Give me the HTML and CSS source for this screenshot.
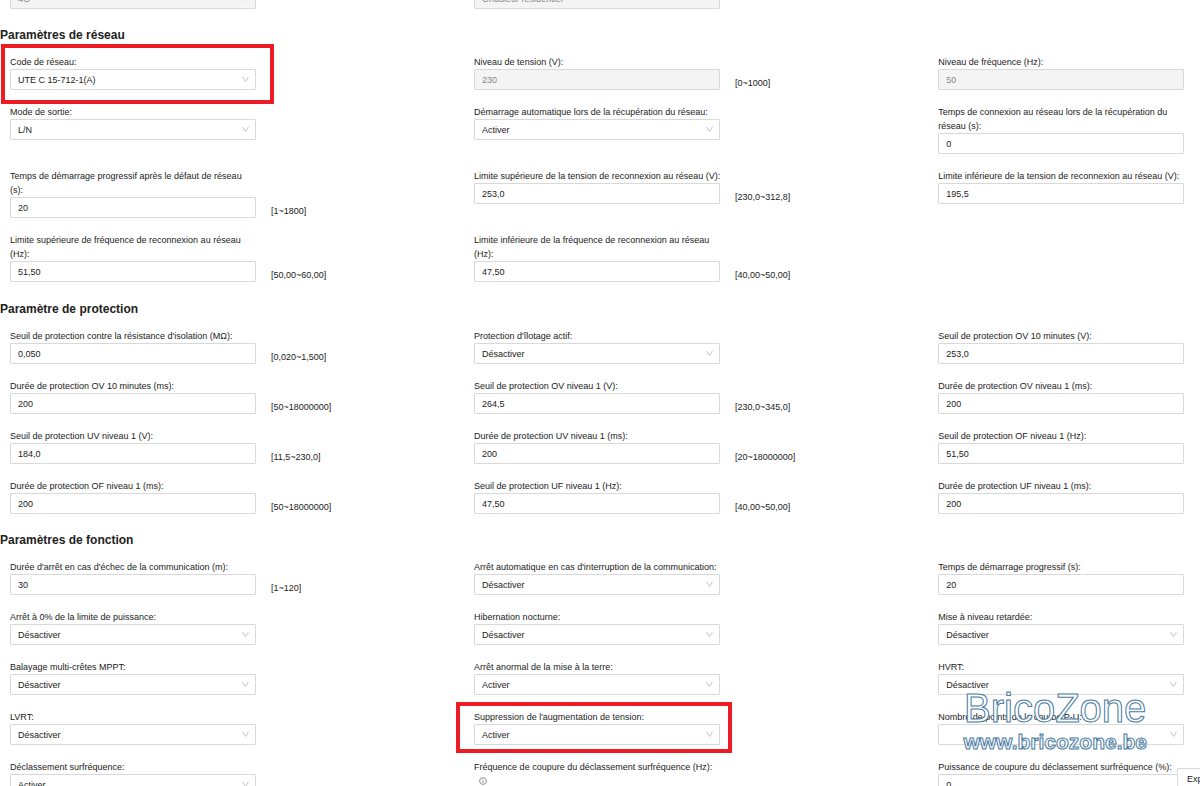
FILE: index.html
```html
<!DOCTYPE html>
<html lang="fr">
<head>
<meta charset="utf-8">
<title>Paramètres de l'onduleur</title>
<link rel="stylesheet" href="styles.css">
<script src="form.js" defer></script>
</head>
<body>
<main class="page">
  <form id="form"></form>
</main>
<button class="export" type="button">Exporter</button>
<div class="watermark"><span class="brand">BricoZone</span><span class="site">www.bricozone.be</span></div>
</body>
</html>
```
FILE: styles.css
```css
* { box-sizing: border-box; }
html, body { height: 100%; margin: 0; overflow: hidden; }
body {
  position: relative;
  background: #fff;
  color: #222;
  font: 9px/14px "Liberation Sans", Arial, sans-serif;
}
.page { height: 100%; overflow: hidden; }
.cut { margin-top: -26px; }
.cut + section { padding-bottom: 1px; }
.title { margin: 0; height: 31px; padding-top: 2px; font-size: 12px; line-height: 18px; font-weight: 700; color: #222; }
.grid { display: grid; grid-template-columns: repeat(3, 39%); align-items: start; padding-left: 10px; }
.field { display: flex; align-items: flex-start; min-height: 50px; padding-bottom: 15px; }
.box { position: relative; width: 53%; }
.label { display: block; margin-right: -2px; color: #222; }
.control { position: relative; display: block; }
.control input, .control select {
  display: block;
  width: 100%;
  height: 21px;
  margin: 0;
  padding: 0 7px;
  border: 1px solid #d9d9d9;
  border-radius: 1px;
  background: #fff;
  color: #222;
  font: inherit;
  appearance: none;
  opacity: 1;
}
.control :disabled { background: #f4f4f4; color: #888; }
.arrow { position: absolute; right: 7px; top: 7px; width: 7px; height: 7px; pointer-events: none; }
.arrow path, .info path, .info circle { fill: none; stroke: #c4c4c4; stroke-width: 1; }
.info { display: block; width: 8px; height: 8px; margin: 3px 0 3px 5px; }
.info path, .info circle { stroke: #777; stroke-width: .8; }
.range { align-self: flex-end; margin-left: 15px; line-height: 14px; color: #222; }
.marked::after { content: ""; position: absolute; inset: -11px -18px -14px -9px; border: 4px solid #ed1c24; pointer-events: none; }
.marked.wide::after { inset: -8px -12px -8px -18px; }
.export {
  position: absolute; right: -30px; bottom: -4px; width: 53px; height: 22px; padding: 0 9px;
  border: 1px solid #d9d9d9; border-radius: 1px; background: #fff; color: #222; font: inherit; text-align: left;
}
.watermark {
  position: absolute; right: 53px; bottom: 31px; display: flex; flex-direction: column; align-items: center;
  color: rgba(255, 255, 255, .95); font-family: "Liberation Sans", Arial, sans-serif; pointer-events: none;
  -webkit-text-stroke: 1px #46799f;
}
.brand { font-size: 40px; line-height: 42px; }
.site { font-size: 21px; line-height: 26px; font-weight: 700; }
```
FILE: form.js
```js
const YES = "Activer", NO = "Désactiver";
// Each field: [label, value, options]; s = drop-down, d = disabled, r = allowed range, m = marked frame, i = info icon
const sections = [
  ["", [
    ["Méthode de communication:", "4G", {s: 1, d: 1}],
    ["Type d'onduleur:", "Onduleur résidentiel", {d: 1}]
  ]],
  ["Paramètres de réseau", [
    ["Code de réseau:", "UTE C 15-712-1(A)", {s: 1, m: "marked"}],
    ["Niveau de tension (V):", "230", {d: 1, r: "[0~1000]"}],
    ["Niveau de fréquence (Hz):", "50", {d: 1}],
    ["Mode de sortie:", "L/N", {s: 1}],
    ["Démarrage automatique lors de la récupération du réseau:", YES, {s: 1}],
    ["Temps de connexion au réseau lors de la récupération du réseau (s):", "0"],
    ["Temps de démarrage progressif après le défaut de réseau<br>(s):", "20", {r: "[1~1800]"}],
    ["Limite supérieure de la tension de reconnexion au réseau (V):", "253,0", {r: "[230,0~312,8]"}],
    ["Limite inférieure de la tension de reconnexion au réseau (V):", "195,5"],
    ["Limite supérieure de fréquence de reconnexion au réseau (Hz):", "51,50", {r: "[50,00~60,00]"}],
    ["Limite inférieure de la fréquence de reconnexion au réseau (Hz):", "47,50", {r: "[40,00~50,00]"}]
  ]],
  ["Paramètre de protection", [
    ["Seuil de protection contre la résistance d'isolation (MΩ):", "0,050", {r: "[0,020~1,500]"}],
    ["Protection d'îlotage actif:", NO, {s: 1}],
    ["Seuil de protection OV 10 minutes (V):", "253,0"],
    ["Durée de protection OV 10 minutes (ms):", "200", {r: "[50~18000000]"}],
    ["Seuil de protection OV niveau 1 (V):", "264,5", {r: "[230,0~345,0]"}],
    ["Durée de protection OV niveau 1 (ms):", "200"],
    ["Seuil de protection UV niveau 1 (V):", "184,0", {r: "[11,5~230,0]"}],
    ["Durée de protection UV niveau 1 (ms):", "200", {r: "[20~18000000]"}],
    ["Seuil de protection OF niveau 1 (Hz):", "51,50"],
    ["Durée de protection OF niveau 1 (ms):", "200", {r: "[50~18000000]"}],
    ["Seuil de protection UF niveau 1 (Hz):", "47,50", {r: "[40,00~50,00]"}],
    ["Durée de protection UF niveau 1 (ms):", "200"]
  ]],
  ["Paramètres de fonction", [
    ["Durée d'arrêt en cas d'échec de la communication (m):", "30", {r: "[1~120]"}],
    ["Arrêt automatique en cas d'interruption de la communication:", NO, {s: 1}],
    ["Temps de démarrage progressif (s):", "20"],
    ["Arrêt à 0% de la limite de puissance:", NO, {s: 1}],
    ["Hibernation nocturne:", NO, {s: 1}],
    ["Mise à niveau retardée:", NO, {s: 1}],
    ["Balayage multi-crêtes MPPT:", NO, {s: 1}],
    ["Arrêt anormal de la mise à la terre:", YES, {s: 1}],
    ["HVRT:", NO, {s: 1}],
    ["LVRT:", NO, {s: 1}],
    ["Suppression de l'augmentation de tension:", YES, {s: 1, m: "marked wide"}],
    ["Nombre de points de la courbe P-U:", "", {s: 1}],
    ["Déclassement surfréquence:", YES, {s: 1}],
    ["Fréquence de coupure du déclassement surfréquence (Hz):", "50,20", {i: 1}],
    ["Puissance de coupure du déclassement surfréquence (%):", "0"]
  ]]
];
const arrow = '<svg class="arrow" viewBox="0 0 7 7"><path d="M.5 1 3.5 5.5 6.5 1"/></svg>';
const info = '<svg class="info" viewBox="0 0 8 8"><circle cx="4" cy="4" r="3.4"/><path d="M4 3.4V6M4 1.8v.9"/></svg>';
let n = 0;
const field = ([label, value, o = {}]) => {
  const id = "f" + n++, off = o.d ? " disabled" : "";
  const control = o.s
    ? `<select id="${id}"${off}><option>${value}</option></select>${arrow}`
    : `<input id="${id}" type="text" value="${value}"${off}>`;
  return `<div class="field"><div class="box ${o.m || ""}"><label class="label" for="${id}">${label}${o.i ? info : ""}</label>
    <div class="control">${control}</div></div>${o.r ? `<span class="range">${o.r}</span>` : ""}</div>`;
};
document.getElementById("form").innerHTML = sections.map(([title, fields]) =>
  `<section class="${title ? "" : "cut"}">${title ? `<h2 class="title">${title}</h2>` : ""}<div class="grid">${fields.map(field).join("")}</div></section>`
).join("");
```
